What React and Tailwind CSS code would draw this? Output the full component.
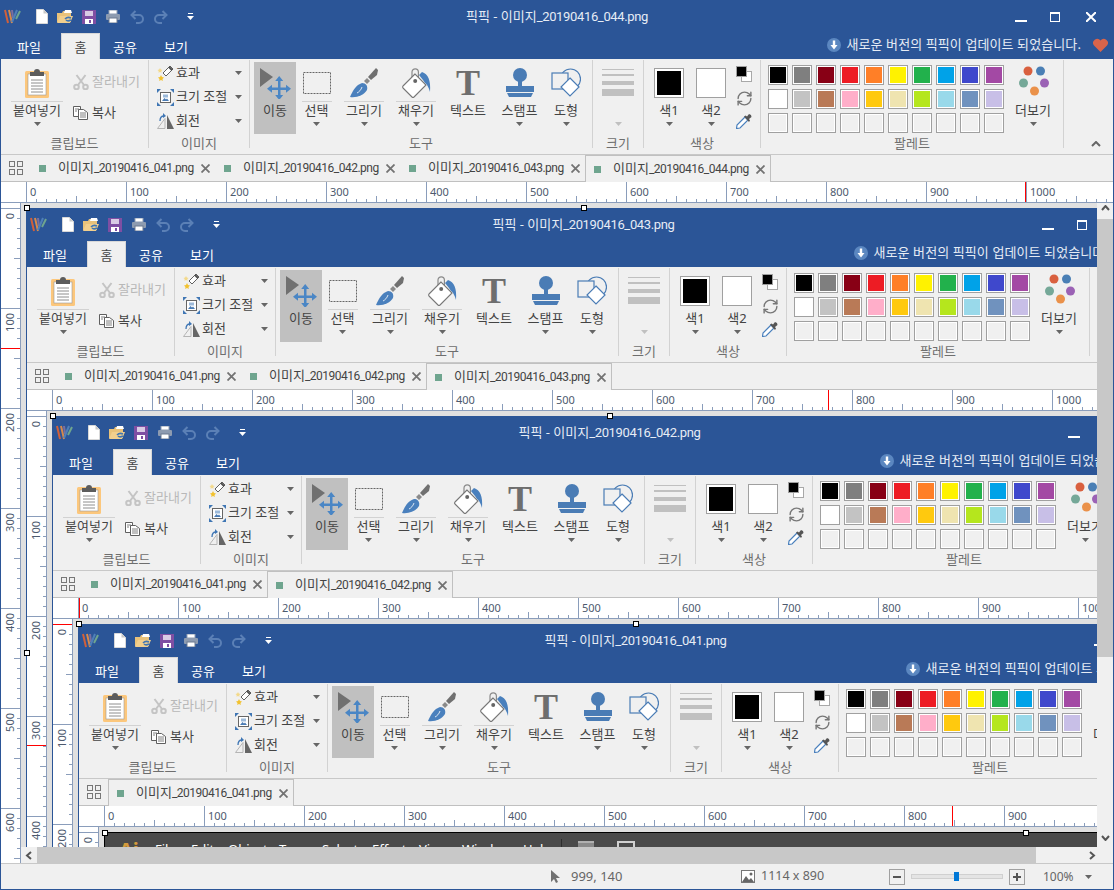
import { RefreshCw } from 'lucide-react';

const BLUE = '#2b5597';

const row1 = ['#000000', '#7f7f7f', '#880015', '#ed1c24', '#ff7f27', '#fff200', '#22b14c', '#00a2e8', '#3f48cc', '#a349a4'];
const row2 = ['#ffffff', '#c3c3c3', '#b97a57', '#ffaec9', '#ffc90e', '#efe4b0', '#b5e61d', '#99d9ea', '#7092be', '#c8bfe7'];
const row3 = Array(10).fill('#f0f0f0');

// small drawings
const Caret = ({ color = '#666666' }) => (
    <svg width="7" height="4" className="block"><path d="M0 0h7L3.5 4z" fill={color} /></svg>
);

const Logo = () => (
    <svg width="18" height="15" viewBox="0 0 18 15">
        <path d="M1 1l3 13" stroke="#d2603a" strokeWidth="2" />
        <path d="M5 1l3 13" stroke="#d98a4a" strokeWidth="2" />
        <path d="M8 1l1 8" stroke="#7a6f9f" strokeWidth="2" />
        <path d="M8 13l5-12" stroke="#4f7fb8" strokeWidth="2" />
        <path d="M12 10l4-8" stroke="#6fa58f" strokeWidth="2" />
    </svg>
);

const NewDoc = () => (
    <svg width="12" height="15" viewBox="0 0 12 15"><path d="M.5.5h7l4 4v10H.5z" fill="#fff" stroke="#d8d8d8" /><path d="M7.5.5v4h4" fill="#c8c8c8" /></svg>
);
const OpenDoc = () => (
    <svg width="16" height="14" viewBox="0 0 16 14">
        <path d="M0 3h5l1-2h8v11H0z" fill="#e9c27a" />
        <path d="M7 3h8l-1-3H8z" fill="#fff" />
        <path d="M0 13l3-7h13l-3 7z" fill="#f2cf8d" />
        <path d="M8 9c2-2 4-2 6-1M14 10c-2 1-4 1-5 0" stroke="#3f76b4" strokeWidth="1.6" fill="none" />
    </svg>
);
const Save = () => (
    <svg width="14" height="14" viewBox="0 0 14 14">
        <rect width="14" height="14" fill="#7f4fa3" />
        <rect x="3" y="1" width="8" height="5" fill="#d9cbe5" />
        <rect x="3" y="9" width="8" height="5" fill="#fff" />
        <rect x="7" y="10" width="2" height="3" fill="#7f4fa3" />
    </svg>
);
const Print = () => (
    <svg width="14" height="13" viewBox="0 0 14 13">
        <rect x="3" y="0" width="8" height="4" fill="#fff" stroke="#8d9bb0" />
        <rect x="0" y="4" width="14" height="6" rx="1" fill="#8d9bb0" />
        <rect x="3" y="8" width="8" height="5" fill="#fff" stroke="#6c7a90" />
    </svg>
);
const Undo = ({ flip }) => (
    <svg width="14" height="14" viewBox="0 0 14 14" className={flip ? '-scale-x-100' : ''}>
        <path d="M2 5h7a3.5 3.5 0 0 1 0 8H6" stroke="#5b80b6" strokeWidth="2" fill="none" />
        <path d="M5.5 1L1.5 5l4 4" stroke="#5b80b6" strokeWidth="2" fill="none" />
    </svg>
);
const QuickMenu = () => (
    <svg width="7" height="7" viewBox="0 0 7 7"><path d="M1 0h5v1H1z M0 3h7L3.5 7z" fill="#fff" /></svg>
);

const Paste = () => (
    <svg width="24" height="30" viewBox="0 0 24 30">
        <rect x="0" y="3" width="24" height="27" rx="1.5" fill="#fcc77c" />
        <rect x="3" y="6" width="18" height="21" fill="#fff" stroke="#9a9a9a" strokeWidth=".6" />
        <path d="M6 12h12M6 15h12M6 18h12M6 21h12M6 24h12" stroke="#8e8e8e" />
        <path d="M5 8V4h4a3 3 0 0 1 6 0h4v4z" fill="#5c5c5c" />
    </svg>
);
const Cut = () => (
    <svg width="16" height="16" viewBox="0 0 16 16" fill="none" stroke="#c4c4c4" strokeWidth="2">
        <circle cx="3.5" cy="13" r="2.3" />
        <circle cx="12.5" cy="13" r="2.3" />
        <path d="M5 11L12.5 1M11 11L3.5 1" />
    </svg>
);
const Copy = () => (
    <svg width="15" height="14" viewBox="0 0 15 14" fill="#fff" stroke="#5f5f5f">
        <path d="M.5.5h7v10h-7z" />
        <path d="M5.5 3.5h5l4 3v7h-9z" />
        <path d="M2 3h4M2 5h2M7 7h6M7 9h6M7 11h6" strokeWidth=".8" />
    </svg>
);
const Wand = () => (
    <svg width="17" height="17" viewBox="0 0 17 17">
        <path d="M6 8l7-7 3 3-7 7z" fill="#fff" stroke="#606060" />
        <path d="M12 2l3 3" stroke="#505050" strokeWidth="2" />
        <path d="M4 10l1 2 2 .4-1.500 1.500.3 2.100-1.800-1-1.800 1 .3-2.100L1 12.400l2-.4z" fill="#f2c230" />
        <path d="M3 3l.8 1.600 1.700.3-1.200 1.200.2 1.700L3 7l-1.500.8.2-1.700L.5 4.900l1.700-.3z" fill="#f3d98a" />
    </svg>
);
const Resize = () => (
    <svg width="17" height="17" viewBox="0 0 17 17">
        <rect x="3.500" y="3.500" width="10" height="10" fill="#fff" stroke="#666" />
        <path d="M5 12l2.500-3 1.500 1.500 1-1 2 2.500z" fill="#4a7cb5" />
        <rect x="6" y="5.500" width="5" height="3" fill="#9cb9d9" />
        <path d="M0 0h4L0 4zM17 0h-4l4 4zM0 17h4l-4-4zM17 17h-4l4-4z" fill="#3f76b4" />
    </svg>
);
const Rotate = () => (
    <svg width="17" height="16" viewBox="0 0 17 16">
        <path d="M.5 15.500L8 5.500v10z" fill="#f0f0f0" stroke="#b5b5b5" />
        <path d="M10 2v14h7z" fill="#666" />
        <path d="M3 8c0-3 1.500-5 4-5" stroke="#3f76b4" strokeWidth="1.300" fill="none" />
        <path d="M6 0l3 3-3 2z" fill="#3f76b4" />
    </svg>
);
const Move = () => (
    <svg width="36" height="32" viewBox="0 0 36 32">
        <path d="M0 1v19l13-10z" fill="#707070" />
        <g fill="#4a86c5">
            <rect x="18" y="13" width="2.500" height="17" />
            <rect x="10.500" y="20.500" width="17" height="2.500" />
            <path d="M19.200 9l4 5h-8zM19.200 33l4-5h-8zM7 21.700l5-4v8zM31 21.700l-5-4v8z" />
        </g>
    </svg>
);
const SelectRect = () => (
    <svg width="28" height="22" viewBox="0 0 28 22"><rect x=".5" y=".5" width="27" height="21" fill="none" stroke="#666" strokeDasharray="2 1" /></svg>
);
const Brush = () => (
    <svg width="28" height="30" viewBox="0 0 28 30">
        <path d="M0 29c3-7 6-12 12-14 4 0 6 3 5 7-3 5-10 8-17 7z" fill="#4a80bd" />
        <path d="M7 25c2-1 4-3 5-6" stroke="#fff" strokeWidth="1" fill="none" opacity=".8" />
        <path d="M14 13l3-3 3 3-3 3z" fill="#8a8a8a" />
        <path d="M18 9l8-9 2 2-1 5-6 5z" fill="#707070" />
    </svg>
);
const Fill = () => (
    <svg width="30" height="32" viewBox="0 0 30 32">
        <path d="M11 14V5a3.200 3.200 0 0 1 6.400 0v6" fill="none" stroke="#8a8a8a" strokeWidth="1.200" />
        <path d="M14 7L2 19a1.500 1.500 0 0 0 0 2l9 9a1.500 1.500 0 0 0 2 0l12-12z" fill="#fff" stroke="#777" strokeWidth="1.100" />
        <circle cx="14.200" cy="14" r="2" fill="#666" />
        <path d="M21 5c6 2 9 8 8 20-1-4-3-8-5-9l-2-3-4-5z" fill="#4a80bd" />
    </svg>
);
const Stamp = () => (
    <svg width="28" height="30" viewBox="0 0 28 30" fill="#4a7cb5">
        <circle cx="14" cy="7" r="7" />
        <rect x="12" y="12" width="4" height="7" />
        <rect x="0" y="18" width="28" height="6" />
        <path d="M1 25h26l-2 4H3z" />
    </svg>
);
const Shape = () => (
    <svg width="30" height="30" viewBox="0 0 30 30" fill="none" stroke="#4a7cb5" strokeWidth="1.200">
        <circle cx="19.500" cy="11" r="10" />
        <rect x="1" y="5" width="16" height="16" fill="#f0f0f0" />
        <path d="M19 10l9 9-9 9-9-9z" fill="#fff" />
    </svg>
);
const SizeLines = () => (
    <svg width="32" height="28" viewBox="0 0 32 28" fill="#c0c0c0">
        <rect y="0" width="32" height="1" />
        <rect y="5" width="32" height="2" />
        <rect y="12" width="32" height="4" />
        <rect y="20" width="32" height="7" />
    </svg>
);
const Dots = () => (
    <svg width="32" height="34" viewBox="0 0 32 34">
        <circle cx="11" cy="5" r="4.500" fill="#d9603f" />
        <circle cx="23.500" cy="5" r="4.500" fill="#4a7fb5" />
        <circle cx="6.500" cy="17" r="4.500" fill="#75a898" />
        <circle cx="27.500" cy="17" r="4.500" fill="#9b62b5" />
        <circle cx="17.500" cy="25" r="4.500" fill="#ea914a" />
    </svg>
);
const Pipette = () => (
    <svg width="16" height="16" viewBox="0 0 16 16">
        <path d="M9 4L1 12l-.500 3.500L4 15l8-8z" fill="#fff" stroke="#4a80bd" strokeWidth="1.200" />
        <path d="M8 3.500l1.500-1 1.500 1 2-2.500 2 1 .5 2-2.500 2 1 1.500-1 1.500z" fill="#555" />
    </svg>
);
const GridIcon = () => (
    <svg width="14" height="14" viewBox="0 0 14 14" fill="none" stroke="#777"><rect x=".5" y=".5" width="5" height="5" /><rect x="8.500" y=".5" width="5" height="5" /><rect x=".5" y="8.500" width="5" height="5" /><rect x="8.500" y="8.500" width="5" height="5" /></svg>
);
const Close = () => (
    <svg width="9" height="9" viewBox="0 0 9 9" stroke="#737373" strokeWidth="1.800" className="shrink-0"><path d="M.5.5l8 8M8.500.5l-8 8" /></svg>
);
const Heart = () => (
    <svg width="15" height="14" viewBox="0 0 15 14"><path d="M7.500 14L1 7.500a4 4 0 0 1 6.500-5 4 4 0 0 1 6.500 5z" fill="#d9644a" /></svg>
);
const UpdateIcon = () => (
    <svg width="14" height="14" viewBox="0 0 14 14">
        <circle cx="7" cy="7" r="7" fill="#5b87c0" />
        <path d="M5.800 2.500h2.400v4.500h2.300L7 11.500 3.500 7h2.300z" fill="#fff" />
    </svg>
);

// Hangul runs at 13px, the latin part of the file name sits tighter
const FileName = ({ name, title }) => (
    <>
        이미지
        <span className={`font-['Roboto',sans-serif] ${title ? 'text-[13px] tracking-[-0.35px]' : 'text-[12px] tracking-[-0.5px]'}`}>_20190416_{name}.png</span>
    </>
);

const BigBtn = ({ w, icon, label, line, caret = true, active, disabled }) => (
    <div className={`shrink-0 h-[72px] flex flex-col items-center ${active ? 'bg-[#c0c0c0]' : ''}`} style={{ width: w }}>
        <div className="h-[39px] pt-[3px] flex items-center justify-center">{icon}</div>
        <div className="h-px bg-[#d2d2d2]" style={{ width: line || 0 }}></div>
        <div className="h-[17px] leading-[17px] whitespace-nowrap">{label}</div>
        {caret && <div className="mt-[3px]"><Caret color={disabled ? '#c0c0c0' : '#666666'} /></div>}
    </div>
);

const Group = ({ w, label, children }) => (
    <div className="shrink-0 h-[88px] mt-px border-r border-[#d2d2d2] flex flex-col" style={{ width: w }}>
        <div className="h-[75px] shrink-0 flex">{children}</div>
        <div className="h-[16px] shrink-0 leading-[16px] text-center text-[#6e6e6e]">{label}</div>
    </div>
);

const ImgRow = ({ icon, label }) => (
    <div className="h-[24px] flex items-center">
        <div className="w-[17px] flex justify-center">{icon}</div>
        <span className="ml-[2px] whitespace-nowrap">{label}</span>
        <div className="ml-auto mr-[4px]"><Caret /></div>
    </div>
);

const Ribbon = () => (
    <div className="h-[96px] shrink-0 bg-[#f0f0f0] border-b border-[#c8c8c8] flex text-[13px] text-[#444444]">
        <Group w={148} label="클립보드">
            <div className="ml-[10px] mt-[2px]"><BigBtn w={52} line={52} icon={<Paste />} label="붙여넣기" /></div>
            <div className="ml-[10px] mt-[10px] flex flex-col gap-[7px]">
                <div className="h-[24px] flex items-center gap-[3px] text-[#b8b8b8]"><Cut /><span>잘라내기</span></div>
                <div className="h-[24px] flex items-center gap-[4px]"><Copy /><span>복사</span></div>
            </div>
        </Group>
        <Group w={101} label="이미지">
            <div className="ml-[8px] mt-px w-[89px] flex flex-col">
                <ImgRow icon={<Wand />} label="효과" />
                <ImgRow icon={<Resize />} label="크기 조절" />
                <ImgRow icon={<Rotate />} label="회전" />
            </div>
        </Group>
        <Group w={343} label="도구">
            <div className="ml-[4px] mt-[2px] flex">
                <BigBtn w={42} active caret={false} icon={<div className="pl-[6px]"><Move /></div>} label="이동" />
                <BigBtn w={41} line={30} icon={<SelectRect />} label="선택" />
                <BigBtn w={54} line={40} icon={<Brush />} label="그리기" />
                <BigBtn w={50} line={40} icon={<Fill />} label="채우기" />
                <BigBtn w={54} caret={false} icon={<span className="font-['Liberation_Serif',serif] font-bold text-[36px] leading-[30px] text-[#6e6e6e]">T</span>} label="텍스트" />
                <BigBtn w={49} icon={<Stamp />} label="스탬프" />
                <BigBtn w={44} icon={<Shape />} label="도형" />
            </div>
        </Group>
        <Group w={51} label="크기">
            <div className="mt-[2px]"><BigBtn w={50} disabled icon={<SizeLines />} label="" /></div>
        </Group>
        <Group w={117} label="색상">
            <div className="ml-[4px] mt-[2px] flex">
                <BigBtn w={42} icon={<div className="w-[30px] h-[30px] border border-[#a0a0a0] p-[2px] bg-white"><div className="w-full h-full bg-black"></div></div>} label="색1" />
                <BigBtn w={42} icon={<div className="w-[30px] h-[30px] border border-[#a0a0a0] bg-white"></div>} label="색2" />
                <div className="ml-[4px] w-[16px] flex flex-col items-center">
                    <div className="relative mt-[4px] w-[16px] h-[16px]">
                        <div className="absolute right-0 bottom-0 w-[11px] h-[11px] border border-[#a8a8a8] bg-white"></div>
                        <div className="absolute left-0 top-0 w-[11px] h-[11px] border border-[#a0a0a0] bg-black"></div>
                    </div>
                    <div className="mt-[8px]"><RefreshCw size={17} color="#777777" strokeWidth={2} /></div>
                    <div className="mt-[6px]"><Pipette /></div>
                </div>
            </div>
        </Group>
        <Group w={303} label="팔레트">
            <div className="ml-[7px] mt-[5px] grid grid-cols-10 gap-[4px] h-fit">
                {[...row1, ...row2, ...row3].map((c, i) => (
                    <div key={i} className="w-[20px] h-[20px] border border-[#a0a0a0] p-px bg-white">
                        <div className="w-full h-full" style={{ background: c }}></div>
                    </div>
                ))}
            </div>
            <div className="ml-[7px] mt-[2px]"><BigBtn w={44} icon={<Dots />} label="더보기" /></div>
        </Group>
        <div className="flex-1 flex items-end justify-end pb-[7px] pr-[12px]">
            <svg width="10" height="6" viewBox="0 0 10 6"><path d="M1 5l4-4 4 4" fill="none" stroke="#666" strokeWidth="2" /></svg>
        </div>
    </div>
);

const Header = ({ name }) => (
    <div className="h-[59px] shrink-0 text-white text-[13px]" style={{ background: BLUE }}>
        <div className="h-[33px] grid grid-cols-[1fr_auto_1fr] items-center">
            <div className="flex items-center">
                <div className="ml-[3px] w-[32px]"><Logo /></div>
                <div className="w-[21px]"><NewDoc /></div>
                <div className="w-[25px]"><OpenDoc /></div>
                <div className="w-[24px]"><Save /></div>
                <div className="w-[24px]"><Print /></div>
                <div className="w-[24px]"><Undo /></div>
                <div className="w-[33px]"><Undo flip /></div>
                <QuickMenu />
            </div>
            <div className="whitespace-nowrap text-[#e6ecf5]">픽픽 - <FileName name={name} title /></div>
            <div className="flex items-center justify-end">
                <div className="w-[12px] h-[2px] bg-white mt-[8px]"></div>
                <div className="ml-[23px] w-[10px] h-[10px] border border-white border-t-2"></div>
                <svg width="10" height="10" viewBox="0 0 10 10" className="ml-[26px] mr-[17px]" stroke="#fff" strokeWidth="2"><path d="M0 0l10 10M10 0L0 10" /></svg>
            </div>
        </div>
        <div className="h-[26px] flex">
            <div className="w-[56px] text-center leading-[28px]">파일</div>
            <div className="ml-[4px] w-[39px] h-[26px] bg-[#f0f0f0] border-x border-t border-[#d8d8d8] text-[#444444] text-center leading-[27px]">홈</div>
            <div className="w-[50px] text-center leading-[28px]">공유</div>
            <div className="w-[52px] text-center leading-[28px]">보기</div>
            <div className="ml-auto flex items-center gap-[5px] pb-[3px] pr-[5px] whitespace-nowrap">
                <UpdateIcon />
                <span className="text-[#e6ecf5] tracking-[0.1px]">새로운 버전의 픽픽이 업데이트 되었습니다.</span>
                <div className="ml-[7px]"><Heart /></div>
            </div>
        </div>
    </div>
);

const FileTab = ({ name, active }) => (
    <div className={`shrink-0 flex items-center ${active ? 'w-[186px] h-[27px] pl-[8px] bg-[#f0f0f0] border-x border-t border-[#c0c0c0]' : 'w-[185px] pl-[9px]'}`}>
        <div className="w-[7px] h-[7px] bg-[#6fa58f] shrink-0"></div>
        <span className="ml-[12px] w-[143px] shrink-0 whitespace-nowrap"><FileName name={name} /></span>
        <Close />
    </div>
);

const TabStrip = ({ tabs }) => (
    <div className="h-[27px] shrink-0 bg-[#f0f0f0] border-b border-[#c0c0c0] flex text-[13px] text-[#444444]">
        <div className="w-[29px] shrink-0 flex items-center justify-center pl-px"><GridIcon /></div>
        {tabs.map((t, i) => <FileTab key={t} name={t} active={i === tabs.length - 1} />)}
    </div>
);

const hTicks = Array.from({ length: 9 }, (_, i) => (i + 1) * 10);

const HRuler = ({ mark }) => (
    <div className="relative h-[21px] shrink-0 bg-white border-b border-[#8a9dbb] pl-[25px] flex overflow-hidden text-[11px] leading-[19px] text-[#4d5a6e]">
        {Array.from({ length: 11 }, (_, i) => (
            <div key={i} className="relative shrink-0 w-[100px] h-full border-l border-[#8a9dbb] pl-[3px]">
                {i * 100}
                <svg width="100" height="20" className="absolute left-[-1px] top-0">
                    {hTicks.map(t => <rect key={t} x={t} y={t === 50 ? 14 : 17} width="1" height={t === 50 ? 6 : 3} fill="#8a9dbb" />)}
                </svg>
            </div>
        ))}
        {mark != null && <div className="absolute top-0 bottom-0 w-px bg-[#ff0000]" style={{ left: mark - 1 }}></div>}
    </div>
);

const VRuler = ({ mark, count = 7 }) => (
    <div className="relative w-[20px] shrink-0 bg-white border-r border-[#8a9dbb] pt-[5px] overflow-hidden text-[11px] leading-[12px] text-[#4d5a6e]">
        {Array.from({ length: count }, (_, i) => (
            <div key={i} className="relative h-[100px] border-t border-[#8a9dbb] flex pl-[3px]">
                <span className="[writing-mode:vertical-rl] rotate-180 self-start mt-[4px]">{i * 100}</span>
                <svg width="20" height="100" className="absolute left-0 top-[-1px]">
                    {hTicks.map(t => <rect key={t} x={t === 50 ? 13 : 16} y={t} width={t === 50 ? 6 : 3} height="1" fill="#8a9dbb" />)}
                </svg>
            </div>
        ))}
        {mark != null && <div className="absolute left-0 right-0 h-px bg-[#ff0000]" style={{ top: mark }}></div>}
    </div>
);

const Handle = ({ className }) => (
    <div className={`absolute w-[6px] h-[6px] bg-white border border-black z-10 ${className}`}></div>
);

const menuItems = [['File', 36], ['Edit', 37], ['Object', 51], ['Type', 43], ['Select', 50], ['Effect', 47], ['View', 43], ['Window', 61], ['Help', 38]];

const AiWindow = () => (
    <div className="relative w-[1114px] shrink-0 border-l border-t border-black bg-[#4a4a4a] h-[40px]">
        <Handle className="left-[-3px] top-[-3px]" />
        <Handle className="left-[918px] top-[-3px]" />
        <div className="flex items-center h-[34px] text-[13px] text-white">
            <span className="ml-[14px] w-[36px] font-bold text-[20px] text-[#d39a3c]">Ai</span>
            {menuItems.map(([m, w]) => <span key={m} style={{ width: w }}>{m}</span>)}
            <div className="w-px h-[22px] bg-[#2c2c2c]"></div>
            <div className="ml-[16px] w-[16px] h-[18px] bg-[#8a8a8a] border-t-2 border-[#b0b0b0]"></div>
            <div className="ml-[23px] w-[18px] h-[18px] border-2 border-[#d0d0d0]"></div>
        </div>
    </div>
);

const levels = [
    { name: '044', tabs: ['041', '042', '043', '044'], hMark: 1025, vMark: 145 },
    { name: '043', tabs: ['041', '042', '043'], hMark: 802, vMark: 334 },
    { name: '042', tabs: ['041', '042'], hMark: 27, vMark: 5 },
    { name: '041', tabs: ['041'], hMark: 874 },
];

const NestedWindow = ({ level }) => {
    const cfg = levels[level];
    return (
        <div className="relative w-[1114px] shrink-0 flex flex-col border-l" style={{ borderColor: BLUE }}>
            <Handle className="left-[-3px] top-[-3px]" />
            <Handle className="left-[554px] top-[-3px]" />
            <Handle className="left-[-3px] top-[442px]" />
            <Header name={cfg.name} />
            <Ribbon />
            <TabStrip tabs={cfg.tabs} />
            <HRuler mark={cfg.hMark} />
            <div className="flex">
                <VRuler mark={cfg.vMark} count={6 - level} />
                <div className="flex-1 min-w-0 overflow-hidden bg-[#e0e0e0] pl-[5px] pt-[5px] flex items-start">
                    {level < 3 ? <NestedWindow level={level + 1} /> : <AiWindow />}
                </div>
            </div>
        </div>
    );
};

export default function App() {
    const cfg = levels[0];
    return (
        <div className="w-[1114px] h-[890px] overflow-hidden flex flex-col border-x border-b bg-[#f0f0f0] font-['Noto_Sans','Noto_Sans_CJK_KR',sans-serif]" style={{ borderColor: BLUE }}>
            <Header name={cfg.name} />
            <Ribbon />
            <TabStrip tabs={cfg.tabs} />
            <HRuler mark={cfg.hMark} />
            <div className="flex-1 min-h-0 flex">
                <VRuler mark={cfg.vMark} />
                <div className="flex-1 min-w-0 flex flex-col">
                    <div className="flex-1 min-h-0 flex">
                        <div className="flex-1 min-w-0 overflow-hidden bg-[#e0e0e0] pl-[5px] pt-[5px] flex items-start">
                            <NestedWindow level={1} />
                        </div>
                        <div className="w-[16px] shrink-0 bg-[#f0f0f0] flex flex-col items-center">
                            <svg width="9" height="6" viewBox="0 0 9 6" className="mt-[2px]"><path d="M1 5l3.500-4L8 5" fill="none" stroke="#555" strokeWidth="2" /></svg>
                            <div className="w-full h-[438px] mt-[8px] bg-[#c8c8c8]"></div>
                            <svg width="9" height="6" viewBox="0 0 9 6" className="mt-auto mb-[6px]"><path d="M1 1l3.500 4L8 1" fill="none" stroke="#555" strokeWidth="2" /></svg>
                        </div>
                    </div>
                    <div className="h-[16px] shrink-0 bg-[#f0f0f0] flex items-center">
                        <svg width="16" height="9" viewBox="0 0 16 9"><path d="M10 1L6 4.500 10 8" fill="none" stroke="#555" strokeWidth="2" /></svg>
                        <div className="w-[999px] h-full bg-[#c8c8c8]"></div>
                        <svg width="9" height="9" viewBox="0 0 9 9" className="ml-[52px]"><path d="M2 1l4 3.500L2 8" fill="none" stroke="#555" strokeWidth="2" /></svg>
                    </div>
                </div>
            </div>
            <div className="h-[26px] shrink-0 border-t border-[#c8c8c8] bg-[#f0f0f0] flex items-center text-[13px] text-[#666666]">
                <svg width="10" height="13" viewBox="0 0 10 13" className="ml-[550px]"><path d="M0 0v12l3-3 2 4 2-1-2-4h4z" fill="#707070" /></svg>
                <span className="ml-[10px] w-[170px]">999, 140</span>
                <svg width="14" height="13" viewBox="0 0 14 13" className="shrink-0"><rect x=".5" y=".5" width="13" height="12" fill="#fff" stroke="#777" /><path d="M1 12l4-6 3 4 2-2 3 4z" fill="#666" /><circle cx="10" cy="4" r="1.500" fill="#666" /></svg>
                <span className="ml-[6px] w-[128px] text-[12.5px]">1114 x 890</span>
                <div className="w-[16px] h-[16px] border border-[#a0a0a0] flex items-center justify-center"><div className="w-[8px] h-[2px] bg-[#555555]"></div></div>
                <div className="relative ml-[6px] w-[92px] h-[5px] bg-[#e4e4e4] border border-[#d0d0d0]">
                    <div className="absolute left-[42px] top-[-3px] w-[5px] h-[9px] bg-[#0078d7]"></div>
                </div>
                <div className="ml-[6px] relative w-[16px] h-[16px] border border-[#a0a0a0] flex items-center justify-center">
                    <div className="w-[8px] h-[2px] bg-[#555555]"></div>
                    <div className="absolute w-[2px] h-[8px] bg-[#555555]"></div>
                </div>
                <span className="ml-[18px] w-[42px] text-[12px]">100%</span>
                <Caret />
            </div>
        </div>
    );
}
